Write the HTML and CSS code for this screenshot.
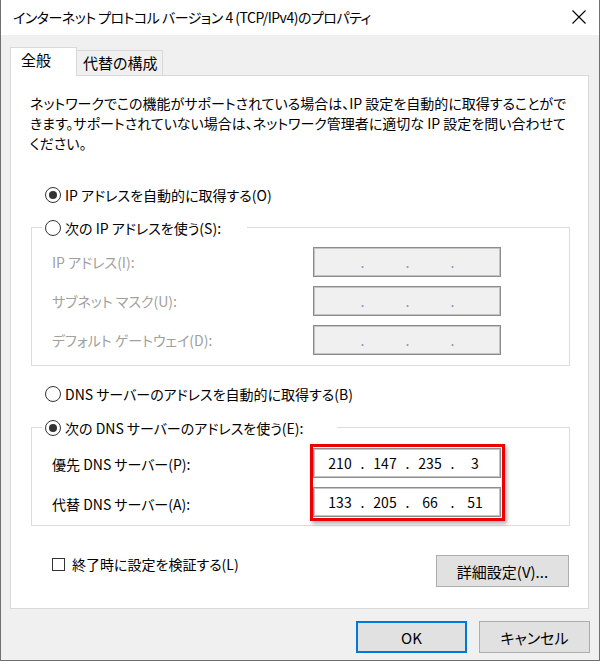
FILE: index.html
```html
<!DOCTYPE html>
<html lang="ja">
<head>
    <meta charset="UTF-8">
    <title>インターネット プロトコル バージョン 4 (TCP/IPv4)のプロパティ</title>
    <link rel="stylesheet" href="styles.css">
</head>
<body>
    <div class="window">
        <div class="titlebar">
            <span class="title">インターネット プロトコル バージョン 4 (TCP/IPv4)のプロパティ</span>
            <svg class="close" width="14" height="14" viewBox="0 0 14 14">
                <path d="M0.5 0.5 L13.5 13.5 M13.5 0.5 L0.5 13.5" stroke="#000" stroke-width="1.1" fill="none"/>
            </svg>
        </div>

        <div class="client">
            <div class="tabs">
                <div class="tab tab-active">全般</div>
                <div class="tab">代替の構成</div>
            </div>

            <div class="panel">
                <p class="desc">ネットワークでこの機能がサポートされている場合は、IP 設定を自動的に取得することがで<br>きます。サポートされていない場合は、ネットワーク管理者に適切な IP 設定を問い合わせて<br>ください。</p>

                <div class="option option-ip"><span class="radio checked"></span>IP アドレスを自動的に取得する(O)</div>

                <div class="group group-ip">
                    <div class="legend legend-ip"><span class="radio"></span>次の IP アドレスを使う(S):</div>
                    <div class="fields">
                        <span class="field-label disabled">IP アドレス(I):</span>
                        <div class="ipbox ipbox-disabled"><span class="octet"></span><span class="dot">.</span><span class="octet"></span><span class="dot">.</span><span class="octet"></span><span class="dot">.</span><span class="octet"></span></div>
                        <span class="field-label disabled">サブネット マスク(U):</span>
                        <div class="ipbox ipbox-disabled"><span class="octet"></span><span class="dot">.</span><span class="octet"></span><span class="dot">.</span><span class="octet"></span><span class="dot">.</span><span class="octet"></span></div>
                        <span class="field-label disabled">デフォルト ゲートウェイ(D):</span>
                        <div class="ipbox ipbox-disabled"><span class="octet"></span><span class="dot">.</span><span class="octet"></span><span class="dot">.</span><span class="octet"></span><span class="dot">.</span><span class="octet"></span></div>
                    </div>
                </div>

                <div class="option option-dns"><span class="radio"></span>DNS サーバーのアドレスを自動的に取得する(B)</div>

                <div class="group group-dns">
                    <div class="legend legend-dns"><span class="radio checked"></span>次の DNS サーバーのアドレスを使う(E):</div>
                    <div class="dns-row">
                        <div class="dns-labels">
                            <span class="field-label">優先 DNS サーバー(P):</span>
                            <span class="field-label">代替 DNS サーバー(A):</span>
                        </div>
                        <div class="highlight">
                            <div class="ipbox"><span class="octet">210</span><span class="dot">.</span><span class="octet">147</span><span class="dot">.</span><span class="octet">235</span><span class="dot">.</span><span class="octet">3</span></div>
                            <div class="ipbox"><span class="octet">133</span><span class="dot">.</span><span class="octet">205</span><span class="dot">.</span><span class="octet">66</span><span class="dot">.</span><span class="octet">51</span></div>
                        </div>
                    </div>
                </div>

                <div class="bottom-row">
                    <div class="check-option"><span class="checkbox"></span>終了時に設定を検証する(L)</div>
                    <button class="btn btn-advanced">詳細設定(V)...</button>
                </div>
            </div>

            <div class="footer">
                <button class="btn btn-default">OK</button>
                <button class="btn">キャンセル</button>
            </div>
        </div>
    </div>
</body>
</html>
```

FILE: styles.css
```css
/* Reset */
* { margin: 0; padding: 0; box-sizing: border-box; }
body { font-family: "Noto Sans CJK JP", "Noto Sans", sans-serif; font-feature-settings: "palt"; font-size: 14px; color: #000; background: #fff; }

/* Window frame */
.window { width: 600px; height: 661px; border: 1px solid #6f6f6f; border-top: none; display: flex; flex-direction: column; }
.titlebar { height: 35px; background: #fff; display: flex; align-items: center; justify-content: space-between; padding: 0 13px 0 12px; }
.title { font-size: 14px; letter-spacing: -0.5px; line-height: 20px; margin-top: -1px; }
.close { display: block; margin-top: -1px; }

.client { flex-grow: 1; background: #f0f0f0; padding-left: 9px; }

/* Tabs */
.tabs { display: flex; align-items: flex-end; margin-top: 12px; height: 28px; }
.tab { font-size: 15px; line-height: 22px; height: 25px; padding: 1px 0 0 6px; width: 86px; border: 1px solid #d9d9d9; border-left: none; border-bottom: none; background: #f0f0f0; }
.tab-active { position: relative; z-index: 1; width: 67px; height: 29px; margin-bottom: -1px; padding-left: 10px; border-left: 1px solid #d9d9d9; background: #fff; }

/* Panel */
.panel { width: 579px; height: 534px; background: #fff; border: 1px solid #d9d9d9; display: flex; flex-direction: column; }
.desc { margin: 17px 0 0 19px; line-height: 20px; }

.option, .legend { display: flex; align-items: center; height: 24px; }
.option { margin-left: 34px; }
.option-ip { margin-top: 30px; }
.option-dns { margin-top: 16px; }

.radio { width: 16px; height: 16px; border: 1px solid #333; border-radius: 50%; margin-right: 4px; display: flex; align-items: center; justify-content: center; flex-shrink: 0; }
.radio.checked:before { content: ""; width: 8px; height: 8px; border-radius: 50%; background: #333; }

/* Group boxes */
.group { width: 539px; margin-left: 20px; border: 1px solid #dcdcdc; }
.group-ip { margin-top: 20px; padding-bottom: 10px; }
.group-dns { margin-top: 21px; padding-bottom: 4px; }
.legend { margin: -12px 0 0 10px; padding-left: 3px; background: #fff; }
.legend-ip { width: 205px; }
.legend-dns { width: 295px; }

.fields { display: grid; grid-template-columns: 261px 188px; grid-auto-rows: 30px; row-gap: 9px; margin: 7px 0 0 20px; }
.field-label { line-height: 30px; height: 30px; }
.disabled { color: #a0a0a0; }

.ipbox { width: 188px; height: 30px; display: flex; align-items: center; padding: 0 5px 0 6px; border: 1px solid #8c8c8c; box-shadow: inset 0 0 0 1px #c4c4c4; background: #fff; line-height: 20px; }
.ipbox-disabled { background: #f0f0f0; color: #8a9ab5; }
.octet { width: 40px; text-align: center; }
.dot { width: 5px; text-align: center; }

.dns-row { display: flex; margin: 4px 0 0 20px; }
.dns-labels { width: 258px; padding-top: 4px; display: flex; flex-direction: column; gap: 9px; }
.dns-labels .field-label { margin-top: 1px; }
.highlight { display: flex; flex-direction: column; gap: 9px; padding: 1px 1px 1px 0; border: 3px solid #ec0000; box-shadow: 2px 3px 4px rgba(0, 0, 0, 0.3); }

/* Bottom row */
.bottom-row { display: flex; justify-content: space-between; align-items: flex-start; margin: 28px 19px 0 41px; }
.check-option { display: flex; align-items: center; line-height: 20px; }
.checkbox { width: 13px; height: 13px; border: 1px solid #333; margin-right: 7px; }

.btn { font-family: inherit; font-feature-settings: "palt"; font-size: 15px; color: #000; height: 32px; width: 111px; background: #e1e1e1; border: 1px solid #adadad; }
.btn-advanced { width: 133px; margin-top: 1px; }
.btn-default { border: 2px solid #0078d7; }

.footer { display: flex; justify-content: flex-end; gap: 12px; margin-top: 12px; padding-right: 9px; }
```
